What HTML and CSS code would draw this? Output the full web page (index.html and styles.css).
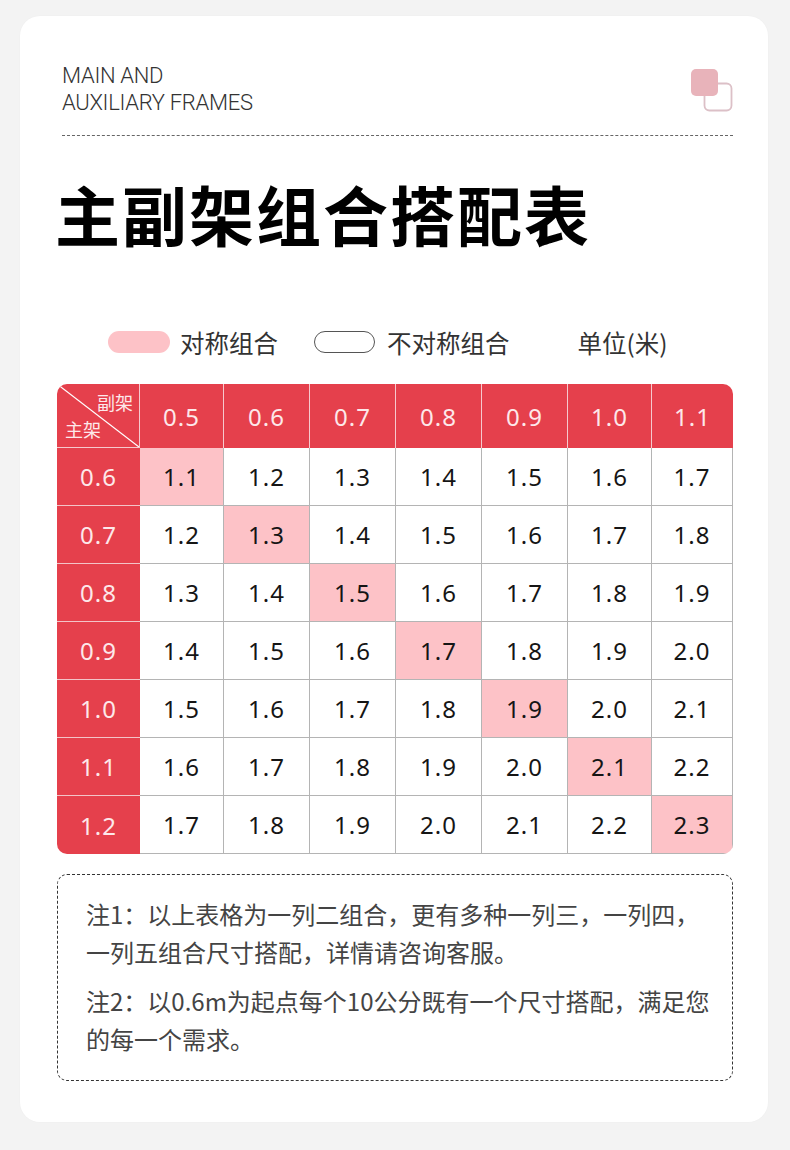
FILE: index.html
```html
<!DOCTYPE html>
<html lang="zh">
<head>
<meta charset="utf-8">
<link rel="stylesheet" href="styles.css">
</head>
<body>
<div class="card">
  <header class="top">
    <div class="eyebrow">MAIN AND<br>AUXILIARY FRAMES</div>
    <svg class="logo" width="44" height="44" viewBox="0 0 44 44">
      <rect x="14.5" y="14.5" width="27" height="27" rx="5" fill="none" stroke="#dcc0c7" stroke-width="1.8"/>
      <rect x="1" y="0" width="27" height="27" rx="5" fill="#e8b3ba"/>
    </svg>
  </header>
  <div class="rule"></div>
  <h1 class="title">主副架组合搭配表</h1>

  <div class="legend">
    <span class="pill pill-sym"></span><span class="legend-text">对称组合</span>
    <span class="pill pill-asym"></span><span class="legend-text second">不对称组合</span>
    <span class="legend-unit">单位(米)</span>
  </div>

  <div class="table">
    <div class="cell corner">
      <svg class="diag" viewBox="0 0 100 100" preserveAspectRatio="none"><line x1="0" y1="0" x2="100" y2="100" stroke="#fff" stroke-width="1.2" vector-effect="non-scaling-stroke"/></svg>
      <span class="c-top">副架</span>
      <span class="c-bot">主架</span>
    </div>
    <div class="cell head">0.5</div>
    <div class="cell head">0.6</div>
    <div class="cell head">0.7</div>
    <div class="cell head">0.8</div>
    <div class="cell head">0.9</div>
    <div class="cell head">1.0</div>
    <div class="cell head last">1.1</div>

    <div class="cell side">0.6</div>
    <div class="cell hl">1.1</div><div class="cell">1.2</div><div class="cell">1.3</div><div class="cell">1.4</div><div class="cell">1.5</div><div class="cell">1.6</div><div class="cell last">1.7</div>

    <div class="cell side">0.7</div>
    <div class="cell">1.2</div><div class="cell hl">1.3</div><div class="cell">1.4</div><div class="cell">1.5</div><div class="cell">1.6</div><div class="cell">1.7</div><div class="cell last">1.8</div>

    <div class="cell side">0.8</div>
    <div class="cell">1.3</div><div class="cell">1.4</div><div class="cell hl">1.5</div><div class="cell">1.6</div><div class="cell">1.7</div><div class="cell">1.8</div><div class="cell last">1.9</div>

    <div class="cell side">0.9</div>
    <div class="cell">1.4</div><div class="cell">1.5</div><div class="cell">1.6</div><div class="cell hl">1.7</div><div class="cell">1.8</div><div class="cell">1.9</div><div class="cell last">2.0</div>

    <div class="cell side">1.0</div>
    <div class="cell">1.5</div><div class="cell">1.6</div><div class="cell">1.7</div><div class="cell">1.8</div><div class="cell hl">1.9</div><div class="cell">2.0</div><div class="cell last">2.1</div>

    <div class="cell side">1.1</div>
    <div class="cell">1.6</div><div class="cell">1.7</div><div class="cell">1.8</div><div class="cell">1.9</div><div class="cell">2.0</div><div class="cell hl">2.1</div><div class="cell last">2.2</div>

    <div class="cell side bottom">1.2</div>
    <div class="cell bottom">1.7</div><div class="cell bottom">1.8</div><div class="cell bottom">1.9</div><div class="cell bottom">2.0</div><div class="cell bottom">2.1</div><div class="cell bottom">2.2</div><div class="cell hl last bottom">2.3</div>
  </div>

  <div class="notes">
    <p>注1：以上表格为一列二组合，更有多种一列三，一列四，一列五组合尺寸搭配，详情请咨询客服。</p>
    <p>注2：以0.6m为起点每个10公分既有一个尺寸搭配，满足您的每一个需求。</p>
  </div>
</div>
</body>
</html>
```

FILE: styles.css
```css
html, body {
  margin: 0;
  padding: 0;
  background: #f3f3f3;
}
body {
  padding: 16px 22px 28px 20px;
  font-family: "Noto Sans", "Noto Sans CJK SC", sans-serif;
}
.card {
  background: #fff;
  border-radius: 20px;
  height: 1106px;
  padding: 0 35px 0 37px;
  box-sizing: border-box;
  box-shadow: 0 0 2px rgba(0,0,0,0.03);
}
.top {
  display: flex;
  justify-content: space-between;
  align-items: flex-start;
  padding: 46px 0 0 5px;
}
.eyebrow {
  font-family: "Roboto", "Liberation Sans", sans-serif;
  font-weight: 300;
  font-size: 22px;
  line-height: 27px;
  color: #333;
  letter-spacing: -0.3px;
}
.logo {
  margin-top: 7px;
  margin-right: -1px;
}
.rule {
  margin: 19px 0 0 5px;
  border-top: 1px dashed #666;
}
.title {
  margin: 37px 0 0 -2px;
  font-family: "Noto Sans CJK SC", sans-serif;
  font-weight: 700;
  font-size: 65px;
  line-height: 80px;
  letter-spacing: 2px;
  color: #000;
}
.legend {
  display: flex;
  align-items: center;
  margin: 69px 0 0 51px;
  height: 40px;
  font-family: "Noto Sans CJK SC", sans-serif;
  font-size: 24.5px;
  color: #333;
}
.pill {
  display: inline-block;
  width: 62px;
  height: 22px;
  border-radius: 11px;
  box-sizing: border-box;
}
.pill-sym { background: #fdc2c7; }
.pill-asym { border: 1.5px solid #555; width: 61px; }
.legend-text { margin: 0 36px 0 10px; }
.legend-text.second { margin: 0 68px 0 12px; }

.table {
  display: grid;
  grid-template-columns: 83px 84px 86px 86px 86px 86px 84px 81px;
  grid-template-rows: 64px repeat(7, 58px);
  margin: 22px 0 0 0;
  border-radius: 10px;
  overflow: hidden;
  width: 676px;
}
.cell {
  display: flex;
  align-items: center;
  justify-content: center;
  font-family: "Noto Sans", "Open Sans", sans-serif;
  font-size: 24px;
  color: #151515;
  background: #fff;
  border-right: 1px solid #b4b4b4;
  border-bottom: 1px solid #b4b4b4;
  box-sizing: border-box;
  letter-spacing: 1px;
}
.cell.last { border-right: 1px solid #b4b4b4; }
.cell.hl { background: #fdc2c7; }
.head, .side, .corner {
  background: #e5404c;
  color: #fde8ea;
}
.head { border-right: 1px solid #f6c9cd; border-bottom: none; }
.head.last { border-right: none; }
.side { border-right: none; border-bottom: 1px solid #f3c4c8; }
.side.bottom { border-bottom: none; }
.corner {
  position: relative;
  border-right: 1px solid #f6c9cd;
  border-bottom: 1px solid #f6c9cd;
  font-family: "Noto Sans CJK SC", sans-serif;
  font-size: 18px;
  letter-spacing: 0;
}
.diag {
  position: absolute;
  inset: 0;
  width: 100%;
  height: 100%;
}
.c-top {
  position: absolute;
  top: 5px;
  right: 6px;
}
.c-bot {
  position: absolute;
  left: 8px;
  bottom: 5px;
}
.notes {
  margin-top: 20px;
  border: 1px dashed #333;
  border-radius: 10px;
  padding: 20px 16px 22px 28px;
  width: 676px;
  box-sizing: border-box;
  font-family: "Noto Sans CJK SC", sans-serif;
  font-size: 24px;
  line-height: 38px;
  color: #444;
}
.notes p { margin: 0; }
.notes p + p { margin-top: 11px; }
```
